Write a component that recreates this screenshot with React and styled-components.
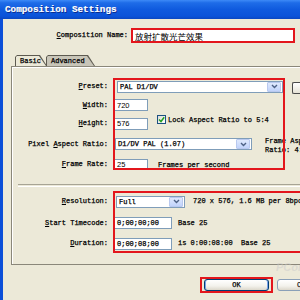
import React from 'react';
import styled, { createGlobalStyle } from 'styled-components';

const mono = `"Liberation Mono", "DejaVu Sans Mono", monospace`;
const sans = `"Liberation Sans", Arial, sans-serif`;
const red = '#e3161c';

const GlobalStyle = createGlobalStyle`
  html, body {
    margin: 0;
    padding: 0;
    background: #ece9d8;
    overflow: hidden;
  }
  body {
    width: 300px;
    height: 300px;
  }
`;

const Window = styled.div`
  position: relative;
  width: 352px;
  height: 300px;
  background: #ece9d8;
  display: flex;
  flex-direction: column;
  font-family: ${mono};
  font-size: 7px;
  color: #000;
  -webkit-text-stroke: 0.25px #000;
`;

const TitleBar = styled.div`
  flex: none;
  height: 19px;
  padding-left: 5px;
  display: flex;
  align-items: center;
  background: linear-gradient(#3d8af7 0%, #1e6ce8 15%, #0f5ade 50%, #0b53d9 85%, #0a47c2 100%);
  color: #fff;
  font-family: ${mono};
  font-weight: bold;
  font-size: 9.3px;
  -webkit-text-stroke: 0.2px #fff;
  text-shadow: 1px 1px 0 #0b2a8a;
`;

const Body = styled.div`
  flex: 1;
  border-left: 3px solid #0b4fd8;
  padding: 9px 0 0 8px;
  display: flex;
  flex-direction: column;
`;

const NameRow = styled.div`
  display: flex;
  align-items: center;
  height: 15px;
  gap: 3px;
`;

const NameLabel = styled.div`
  width: 117px;
  text-align: right;
  line-height: 1;
`;

const NameField = styled.div`
  width: 158px;
  height: 11px;
  border: 2px solid ${red};
  background: #fff;
  padding-left: 2px;
  display: flex;
  align-items: center;
  font-family: "Noto Sans CJK SC", sans-serif;
  font-size: 8.5px;
  -webkit-text-stroke: 0;
  color: #000;
`;

const TabStrip = styled.div`
  display: flex;
  align-items: flex-end;
  height: 11px;
  margin-top: 12px;
  padding-left: 4px;
`;

const Tab = styled.div`
  position: relative;
  z-index: ${p => (p.$active ? 2 : 1)};
  width: ${p => p.$w}px;
  height: 11px;
  margin-left: ${p => (p.$active ? 0 : -1)}px;
  display: flex;
  background: #5d5a50;
  clip-path: polygon(0 100%, 0 2px, 2px 0, calc(100% - 7px) 0, 100% 100%);
`;

const TabFace = styled.div`
  flex: 1;
  margin: 1px 1px 0 1px;
  padding-left: 4px;
  line-height: 10px;
  background: ${p => (p.$active ? '#ece9d8' : '#c8c5b8')};
  clip-path: polygon(0 100%, 0 1px, 1px 0, calc(100% - 7px) 0, 100% 100%);
`;

const Panel = styled.div`
  border: 1px solid #8a877a;
  border-right: none;
  box-shadow: inset 1px 1px 0 #fff;
  padding: 11px 0 11px 0;
  display: flex;
  flex-direction: column;
`;

const Section = styled.div`
  display: flex;
  gap: 6px;
`;

const LabelColumn = styled.div`
  flex: none;
  width: 96px;
  display: flex;
  flex-direction: column;
`;

const Label = styled.div`
  height: ${p => p.$h}px;
  display: flex;
  align-items: center;
  justify-content: flex-end;
  white-space: pre;
  line-height: 1;
`;

const U = styled.span`
  text-decoration: underline;
`;

const ControlColumn = styled.div`
  position: relative;
  width: ${p => (p.$w ? `${p.$w}px` : 'auto')};
  flex: ${p => (p.$w ? 'none' : 1)};
  display: flex;
  flex-direction: column;

  &::after {
    content: '';
    position: absolute;
    top: 0;
    left: -1px;
    right: ${p => p.$right}px;
    bottom: ${p => p.$bottom}px;
    border: 2px solid ${red};
    pointer-events: none;
  }
`;

const Cell = styled.div`
  height: ${p => p.$h}px;
  display: flex;
  align-items: center;
  white-space: pre;
`;

const Field = styled.div`
  flex: none;
  box-sizing: border-box;
  width: ${p => p.$w}px;
  height: ${p => p.$hh || 12}px;
  margin-left: ${p => p.$ml || 0}px;
  border: 1px solid #7f9db9;
  background: #fff;
  padding-left: 2px;
  display: flex;
  align-items: center;
  font-family: ${p => (p.$sans ? sans : mono)};
  font-size: ${p => (p.$sans ? 7.5 : 7)}px;
  -webkit-text-stroke: ${p => (p.$sans ? 0 : '0.25px #000')};
  color: #000;
`;

const SelectBox = styled(Field)`
  padding-right: 1px;
  justify-content: space-between;
`;

const DropButton = styled.div`
  width: 12px;
  height: 8px;
  border: 1px solid #b9c9ef;
  border-radius: 1px;
  background: linear-gradient(#dfe9fd, #c1d3fb);
  display: flex;
  align-items: center;
  justify-content: center;
`;

const Note = styled.span`
  flex: none;
  margin-left: ${p => p.$ml}px;
  margin-top: ${p => p.$mt || 0}px;
  line-height: ${p => p.$lh || 7}px;
`;

const LockGroup = styled.div`
  flex: none;
  align-self: flex-start;
  height: 9px;
  margin-left: 9px;
  display: flex;
  align-items: center;
  gap: 2px;
`;

const CheckBox = styled.div`
  box-sizing: border-box;
  width: 9px;
  height: 9px;
  border: 1px solid #1c5180;
  background: linear-gradient(135deg, #dcdcd7, #fff);
  display: flex;
  align-items: center;
  justify-content: center;
`;

const SideColumn = styled.div`
  padding-top: 4px;
`;

const SideButton = styled.div`
  width: 12px;
  height: 10px;
  border: 1px solid #4a4a4a;
  border-right: none;
  border-radius: 2px 0 0 2px;
  background: linear-gradient(#fff, #e6e3d6);
`;

const Separator = styled.div`
  margin: 12px 0 4px 6px;
  height: 1px;
  border-top: 1px solid #a7a495;
  border-bottom: 1px solid #fff;
`;

const Footer = styled.div`
  display: flex;
  justify-content: flex-end;
  gap: 8px;
  margin-top: 14px;
  padding-right: 10px;
`;

const Button = styled.div`
  position: relative;
  box-sizing: border-box;
  width: 65px;
  height: 12px;
  border: 1px solid ${p => (p.$default ? '#003c74' : '#8aa0b8')};
  border-radius: 3px;
  background: linear-gradient(#ffffff, #f3f2ec 60%, #dcd8cb);
  box-shadow: ${p => (p.$default ? 'inset 1px 0 0 #7aa2e8, inset -1px 0 0 #7aa2e8' : 'none')};
  display: flex;
  align-items: center;
  justify-content: center;
  color: ${p => (p.$default ? '#000' : '#444')};

  &::after {
    content: '';
    display: ${p => (p.$marked ? 'block' : 'none')};
    position: absolute;
    inset: -3px -5px -3px -5px;
    border: 2px solid ${red};
  }
`;

const Watermark = styled.div`
  position: absolute;
  left: 276px;
  top: 261px;
  font-family: ${sans};
  font-weight: bold;
  font-style: italic;
  font-size: 11px;
  -webkit-text-stroke: 0;
  color: rgba(200, 200, 200, 0.45);
`;

const Chevron = () => (
  <svg width="7" height="5" viewBox="0 0 7 5">
    <path d="M1 1 L3.5 3.5 L6 1" fill="none" stroke="#4d6185" strokeWidth="1.4" />
  </svg>
);

const Check = () => (
  <svg width="7" height="7" viewBox="0 0 7 7">
    <path d="M1 3.5 L3 5.5 L6.2 1.2" fill="none" stroke="#21a121" strokeWidth="1.5" />
  </svg>
);

const Select = ({ w, ml, children }) => (
  <SelectBox $w={w} $ml={ml}>
    <span>{children}</span>
    <DropButton><Chevron /></DropButton>
  </SelectBox>
);

const App = () => (
  <>
    <GlobalStyle />
    <Window>
      <TitleBar>Composition Settings</TitleBar>
      <Body>
        <NameRow>
          <NameLabel><U>C</U>omposition Name:</NameLabel>
          <NameField>放射扩散光芒效果</NameField>
        </NameRow>

        <TabStrip>
          <Tab $active $w={32}><TabFace $active>Basic</TabFace></Tab>
          <Tab $w={49}><TabFace>Advanced</TabFace></Tab>
        </TabStrip>

        <Panel>
          <Section>
            <LabelColumn>
              <Label $h={17}><U>P</U>reset:</Label>
              <Label $h={20}><U>W</U>idth:</Label>
              <Label $h={17}><U>H</U>eight:</Label>
              <Label $h={24}>Pixel <U>A</U>spect Ratio:</Label>
              <Label $h={16}><U>F</U>rame Rate:</Label>
            </LabelColumn>
            <ControlColumn $w={172} $right={1} $bottom={2}>
              <Cell $h={17}>
                <Select w={166} ml={3}>PAL D1/DV</Select>
              </Cell>
              <Cell $h={20}>
                <Field $w={34} $sans>720</Field>
              </Cell>
              <Cell $h={17}>
                <Field $w={34} $sans>576</Field>
                <LockGroup>
                  <CheckBox><Check /></CheckBox>
                  <span>Lock Aspect Ratio to 5:4</span>
                </LockGroup>
              </Cell>
              <Cell $h={24}>
                <Select w={137} ml={1}>D1/DV PAL (1.07)</Select>
                <Note $ml={13} $mt={4} $lh={9}>{'Frame Aspect\nRatio: 4:3'}</Note>
              </Cell>
              <Cell $h={16}>
                <Field $w={34} $hh={11} $sans>25</Field>
                <Note $ml={10} $mt={3}>Frames per second</Note>
              </Cell>
            </ControlColumn>
            <SideColumn>
              <SideButton />
            </SideColumn>
          </Section>

          <Separator />

          <Section>
            <LabelColumn>
              <Label $h={21}><U>R</U>esolution:</Label>
              <Label $h={22}><U>S</U>tart Timecode:</Label>
              <Label $h={19}><U>D</U>uration:</Label>
            </LabelColumn>
            <ControlColumn $right={-4} $bottom={0}>
              <Cell $h={21}>
                <Select w={69} ml={2}>Full</Select>
                <Note $ml={8}>720 x 576, 1.6 MB per 8bpc frame</Note>
              </Cell>
              <Cell $h={22}>
                <Field $w={58}>0;00;00;00</Field>
                <Note $ml={6}>Base 25</Note>
              </Cell>
              <Cell $h={19}>
                <Field $w={58}>0;00;08;00</Field>
                <Note $ml={6}>is 0:00:08:00  Base 25</Note>
              </Cell>
            </ControlColumn>
          </Section>
        </Panel>

        <Footer>
          <Button $default $marked>OK</Button>
          <Button>Cancel</Button>
        </Footer>
      </Body>
      <Watermark>PConline</Watermark>
    </Window>
  </>
);

export default App;
